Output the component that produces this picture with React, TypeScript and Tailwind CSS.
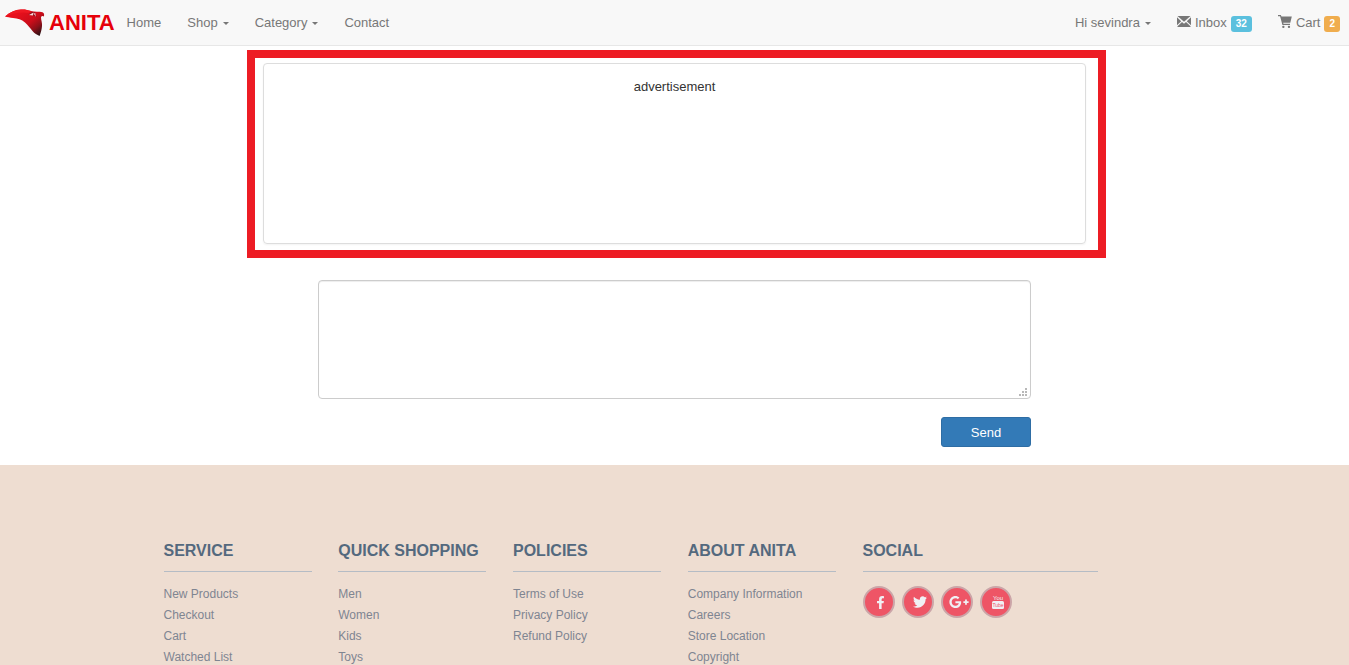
import { FaFacebookF, FaTwitter, FaGooglePlusG } from "react-icons/fa";

const columns = [
  { title: "SERVICE", links: ["New Products", "Checkout", "Cart", "Watched List"] },
  { title: "QUICK SHOPPING", links: ["Men", "Women", "Kids", "Toys"] },
  { title: "POLICIES", links: ["Terms of Use", "Privacy Policy", "Refund Policy"] },
  { title: "ABOUT ANITA", links: ["Company Information", "Careers", "Store Location", "Copyright"] },
];

function Logo() {
  return (
    <svg width="40" height="28" viewBox="0 0 40 28" aria-hidden="true">
      <defs>
        <linearGradient id="wing" gradientUnits="userSpaceOnUse" x1="16" y1="2" x2="36" y2="27">
          <stop offset="0" stopColor="#e8101c" />
          <stop offset="0.45" stopColor="#cc0d1a" />
          <stop offset="0.7" stopColor="#8d1019" />
          <stop offset="1" stopColor="#181214" />
        </linearGradient>
      </defs>
      <path
        d="M0 7.500C5 3 10 0.800 16 0.500C20 0.300 23 1 26 2C30 3.200 34 2.200 37.500 3.200C39.200 4 39.500 5.500 38.800 7.500C37.800 6.600 36.500 6.600 36 8.500C36 11 37.400 14 37 17C36.800 20 36 23 34.600 27C32 25.800 29.500 24.500 27.500 22C24.500 18.500 23 16 20 13.500C16.500 10.500 13 9.500 8 9C5 8.600 2 8.200 0 7.500Z"
        fill="url(#wing)"
      />
      <path d="M0 7.500C5 3 10 0.800 16 0.500C20 0.300 23 1 26 2L23.500 4C17 2.500 9 4 0 7.500Z" fill="#ee1822" />
      <path d="M23.500 5.500L27 3L30 3.500L31.500 8L28.500 6.500Z" fill="#8a0c16" />
      <path d="M24 6L28.500 3.600L28 6.600Z" fill="#f8d8da" />
      <path d="M28.500 4.500L30.300 4L31 8Z" fill="#f0b9bd" />
    </svg>
  );
}

function Caret() {
  return (
    <svg width="6" height="3" viewBox="0 0 6 3" fill="currentColor" className="mt-[2px] ml-[5px]" aria-hidden="true">
      <path d="M0 0H6L3 3Z" />
    </svg>
  );
}

function Envelope() {
  return (
    <svg width="14" height="11" viewBox="0 0 14 11" fill="currentColor" className="-mt-[2px]" aria-hidden="true">
      <path d="M0.500 0H13.500L7 5.800Z" />
      <path d="M0 1.200L4.200 5.200L0 9.200Z" />
      <path d="M14 1.200L9.800 5.200L14 9.200Z" />
      <path d="M5 6L7 7.700L9 6L13.500 10.300V11H0.500V10.300Z" />
    </svg>
  );
}

function Cart() {
  return (
    <svg width="14" height="13" viewBox="0 0 14 13" fill="currentColor" className="-mt-[2px]" aria-hidden="true">
      <path d="M0 0H2.800L3.500 1.500H13.800L12.300 7.700H5.200L5.500 8.800H12V10H4.400L2.100 1.200H0Z" />
      <rect x="4.200" y="10.700" width="2.300" height="2.300" rx="1" />
      <rect x="9.800" y="10.700" width="2.300" height="2.300" rx="1" />
    </svg>
  );
}

function YouTube() {
  return (
    <svg
      width="12"
      height="14"
      viewBox="0 0 12 14"
      fill="currentColor"
      fontFamily="Liberation Sans, sans-serif"
      textAnchor="middle"
      aria-hidden="true"
    >
      <text x="6" y="5" fontSize="6">You</text>
      <rect y="6" width="12" height="8" rx="1.500" />
      <text x="6" y="12" fontSize="5" fill="#ee5566">Tube</text>
    </svg>
  );
}

function Grip() {
  return (
    <svg width="8" height="8" viewBox="0 0 8 8" fill="#b8b8b8" className="pointer-events-none absolute right-[4px] bottom-[3px]" aria-hidden="true">
      <path d="M6 0h2v2h-2zM3 3h2v2h-2zM6 3h2v2h-2zM0 6h2v2h-2zM3 6h2v2h-2zM6 6h2v2h-2z" />
    </svg>
  );
}

const social = [
  { label: "Facebook", icon: <FaFacebookF size={13} /> },
  { label: "Twitter", icon: <FaTwitter size={14} /> },
  { label: "Google Plus", icon: <FaGooglePlusG size={20} /> },
  { label: "YouTube", icon: <YouTube /> },
];

export default function App() {
  return (
    <div className="flex h-screen flex-col overflow-hidden bg-white font-['Liberation_Sans',Arial,sans-serif] text-[13px] leading-5 text-[#333]">
      <nav className="flex h-[46px] shrink-0 items-center justify-between border-b border-[#e7e7e7] bg-[#f8f8f8] pr-[9px] pl-[5px] text-[#777]">
        <div className="flex items-center">
          <a href="#" className="mr-3 flex items-center gap-1 text-[22px] font-bold text-[#e6000a]">
            <Logo />
            ANITA
          </a>
          <div className="flex gap-[26px]">
            <a href="#">Home</a>
            <a href="#" className="flex items-center">Shop<Caret /></a>
            <a href="#" className="flex items-center">Category<Caret /></a>
            <a href="#">Contact</a>
          </div>
        </div>
        <div className="flex items-center gap-[26px]">
          <a href="#" className="flex items-center">Hi sevindra<Caret /></a>
          <a href="#" className="flex items-center gap-1">
            <Envelope />
            Inbox
            <span className="mt-[2px] rounded-[3px] bg-[#5bc0de] px-[5px] text-[10px] leading-4 font-bold text-white">32</span>
          </a>
          <a href="#" className="flex items-center gap-1">
            <Cart />
            Cart
            <span className="mt-[2px] rounded-[3px] bg-[#f0ad4e] px-[5px] text-[10px] leading-4 font-bold text-white">2</span>
          </a>
        </div>
      </nav>

      <main className="shrink-0 pt-1 pb-[18px]">
        <div className="mx-auto w-full max-w-[863px] pl-1">
          <section className="border-8 border-[#ed1c24] pt-[5px] pr-3 pb-[6px] pl-2">
            <div className="min-h-[181px] rounded-[4px] border border-[#ddd] p-[13px] text-center shadow-xs">
              advertisement
            </div>
          </section>
        </div>
        <form className="mx-auto mt-[22px] flex w-full max-w-[713px] flex-col" onSubmit={(e) => e.preventDefault()}>
          <div className="relative">
            <textarea
              aria-label="Message"
              className="block h-[119px] w-full resize-y rounded-[4px] border border-[#ccc] px-3 py-[6px] shadow-[inset_0_1px_1px_rgba(0,0,0,0.075)] outline-none [&::-webkit-resizer]:bg-transparent"
            />
            <Grip />
          </div>
          <button type="submit" className="mt-[18px] h-[30px] w-[90px] self-end rounded-[3px] border border-[#2e6da4] bg-[#337ab7] pt-[2px] text-white">
            Send
          </button>
        </form>
      </main>

      <footer className="grow bg-[#eeddd1] pt-[76px]">
        <div className="mx-auto flex max-w-[1050px] justify-between pr-[102px] pl-[14px]">
          {columns.map((c) => (
            <section key={c.title} className="w-[148px]">
              <h2 className="border-b border-[#b5bcc5] pb-[10px] text-base leading-5 font-bold whitespace-nowrap text-[#54697e]">{c.title}</h2>
              <ul className="pt-3 text-[12px] leading-[21px] text-[#7f8591]">
                {c.links.map((l) => (
                  <li key={l}><a href="#">{l}</a></li>
                ))}
              </ul>
            </section>
          ))}
          <section className="w-[235px]">
            <h2 className="border-b border-[#b5bcc5] pb-[10px] text-base leading-5 font-bold text-[#54697e]">SOCIAL</h2>
            <div className="flex gap-[7px] pt-[14px]">
              {social.map((s) => (
                <a key={s.label} href="#" aria-label={s.label} className="flex size-8 items-center justify-center rounded-full border-2 border-[#cba5a8] bg-[#ee5566] pl-1 text-[#f0f0f4]">
                  {s.icon}
                </a>
              ))}
            </div>
          </section>
        </div>
      </footer>
    </div>
  );
}
